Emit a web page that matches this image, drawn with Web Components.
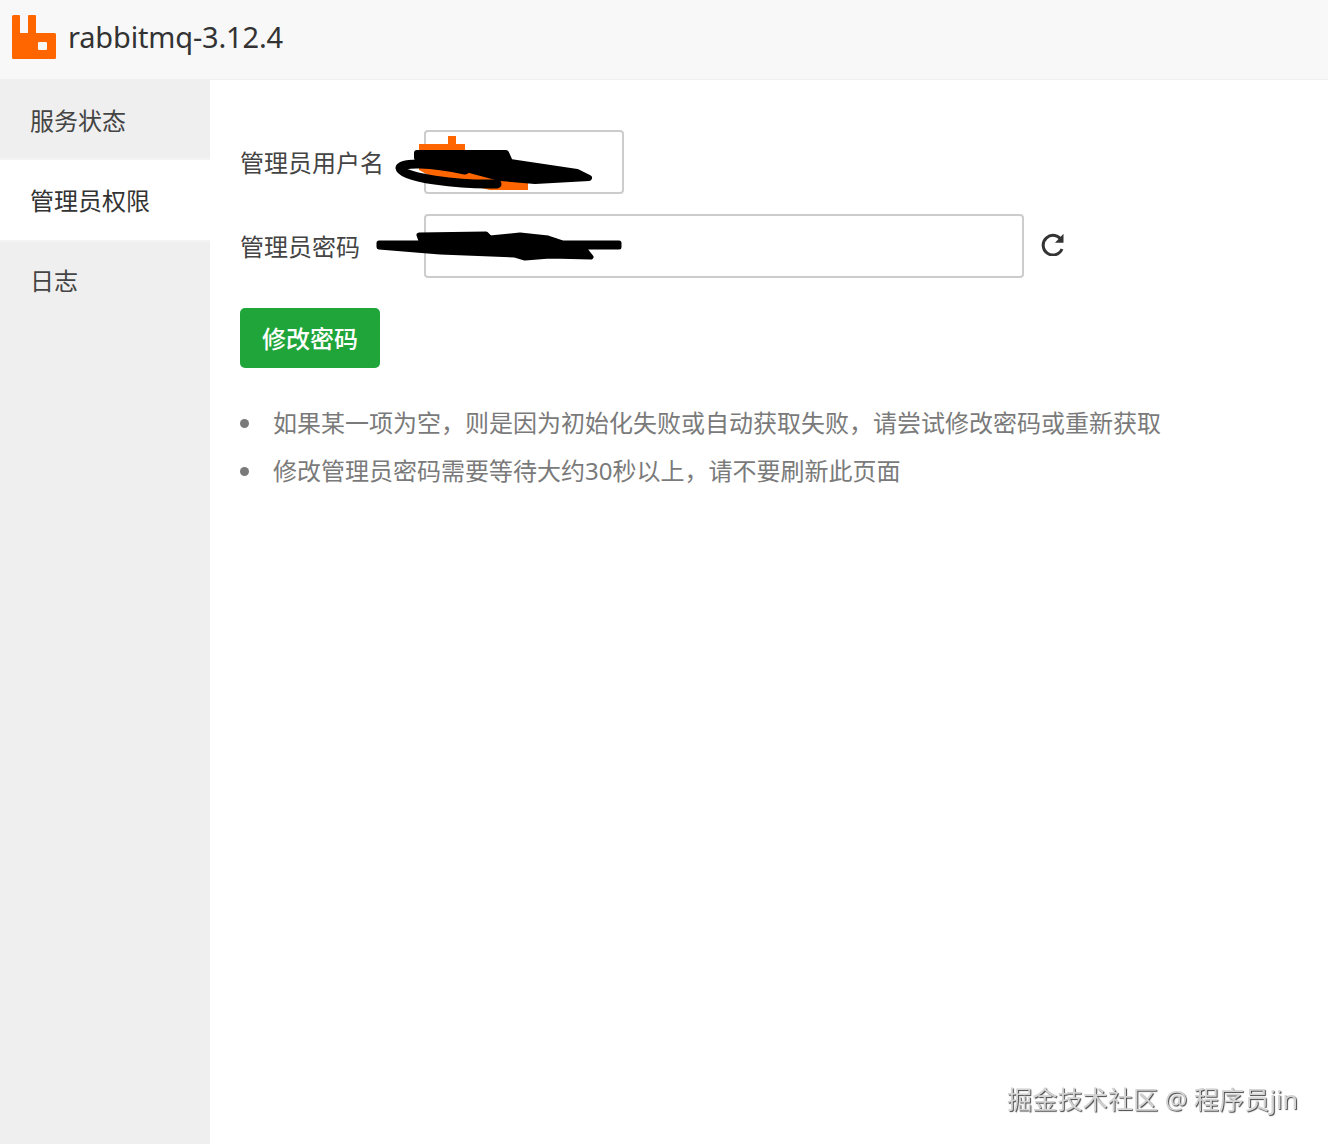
<!DOCTYPE html>
<html lang="zh">
<head>
<meta charset="utf-8">
<title>rabbitmq-3.12.4</title>
<style>
  html, body { margin: 0; height: 100%; background: #fff; }
  body { font-family: "Noto Sans", "Noto Sans CJK SC", sans-serif; color: #333; overflow: hidden; }
</style>
</head>
<body>
<app-shell>
  <app-header slot="header">rabbitmq-3.12.4</app-header>
  <nav-item slot="nav">服务状态</nav-item>
  <nav-item slot="nav" active>管理员权限</nav-item>
  <nav-item slot="nav">日志</nav-item>

  <form-row label="管理员用户名" width="200"></form-row>
  <form-row label="管理员密码" width="600" refresh></form-row>
  <green-button>修改密码</green-button>
  <tip-list>
    <tip-item>如果某一项为空，则是因为初始化失败或自动获取失败，请尝试修改密码或重新获取</tip-item>
    <tip-item>修改管理员密码需要等待大约30秒以上，请不要刷新此页面</tip-item>
  </tip-list>
  <scribble-marks></scribble-marks>
</app-shell>
<water-mark>掘金技术社区 @ 程序员jin</water-mark>

<script>
// components
const shellTpl = document.createElement('template');
shellTpl.innerHTML = `
  <style>
    :host { display: flex; flex-direction: column; height: 1144px; }
    .body { flex: 1; display: flex; min-height: 0; }
    nav { width: 210px; flex: none; background: #efefef; display: flex; flex-direction: column; }
    main { flex: 1; position: relative; padding: 50px 30px 0; display: flex; flex-direction: column; align-items: flex-start; }
  </style>
  <slot name="header"></slot>
  <div class="body">
    <nav><slot name="nav"></slot></nav>
    <main><slot></slot></main>
  </div>
`;
class AppShell extends HTMLElement {
  constructor() {
    super();
    this.attachShadow({ mode: 'open' });
    this.shadowRoot.appendChild(shellTpl.content.cloneNode(true));
  }
}
customElements.define('app-shell', AppShell);

const headerTpl = document.createElement('template');
headerTpl.innerHTML = `
  <style>
    :host { display: flex; align-items: center; gap: 12px; height: 80px; box-sizing: border-box; padding: 0 12px 5px; background: #f8f8f8; border-bottom: 1px solid #f0f0f0; }
    svg { display: block; width: 44px; height: 44px; }
    span { font-size: 29px; letter-spacing: -0.17px; color: #333; line-height: 1; margin-bottom: 2px; }
  </style>
  <svg viewBox="0 0 44 44"><path fill="#ff6600" fill-rule="evenodd" d="M1.500 0H7a1 1 0 0 1 1 1V18H16V1a1 1 0 0 1 1-1H23a1 1 0 0 1 1 1V18H42.500a1.500 1.500 0 0 1 1.500 1.500V42.500a1.500 1.500 0 0 1-1.500 1.500H1.500A1.500 1.500 0 0 1 0 42.500V1.500A1.500 1.500 0 0 1 1.500 0ZM27 27a1 1 0 0 0-1 1V34a1 1 0 0 0 1 1H34a1 1 0 0 0 1-1V28a1 1 0 0 0-1-1Z"/></svg>
  <span><slot></slot></span>
`;
class AppHeader extends HTMLElement {
  constructor() {
    super();
    this.attachShadow({ mode: 'open' });
    this.shadowRoot.appendChild(headerTpl.content.cloneNode(true));
  }
}
customElements.define('app-header', AppHeader);

const navTpl = document.createElement('template');
navTpl.innerHTML = `
  <style>
    :host { display: flex; align-items: center; height: 80px; box-sizing: border-box; padding: 0 0 2px 30px; font-size: 24px; color: #444; }
    :host([active]) { background: #fff; color: #333; box-shadow: 0 0 4px #fff; }
  </style>
  <slot></slot>
`;
class NavItem extends HTMLElement {
  constructor() {
    super();
    this.attachShadow({ mode: 'open' });
    this.shadowRoot.appendChild(navTpl.content.cloneNode(true));
  }
}
customElements.define('nav-item', NavItem);

const rowTpl = document.createElement('template');
rowTpl.innerHTML = `
  <style>
    :host { display: grid; grid-template-columns: 184px auto auto; align-items: center; margin-bottom: 20px; }
    label { font-size: 24px; color: #444; line-height: 1; padding-top: 2px; }
    input { display: block; height: 64px; box-sizing: border-box; border: 2px solid #cccccc; border-radius: 4px; background: #fff; padding: 0 10px; outline: none; }
    svg { display: none; width: 26px; height: 26px; margin: 0 0 6px 16px; }
    :host([refresh]) svg { display: block; }
  </style>
  <label></label>
  <input type="text">
  <svg viewBox="0 0 26 26"><path d="M21.600 10.500A9.800 9.800 0 1 0 22 19" fill="none" stroke="#333" stroke-width="3"/><path d="M23.500 3.700V12.700H15Z" fill="#333"/></svg>
`;
class FormRow extends HTMLElement {
  constructor() {
    super();
    this.attachShadow({ mode: 'open' });
    this.shadowRoot.appendChild(rowTpl.content.cloneNode(true));
  }
  connectedCallback() {
    this.shadowRoot.querySelector('label').textContent = this.getAttribute('label');
    this.shadowRoot.querySelector('input').style.width = this.getAttribute('width') + 'px';
  }
}
customElements.define('form-row', FormRow);

const btnTpl = document.createElement('template');
btnTpl.innerHTML = `
  <style>
    :host { display: block; margin-top: 10px; }
    button { display: block; width: 140px; height: 60px; border: 0; border-radius: 5px; background: #20a53a; color: #fff; font: inherit; font-size: 24px; font-weight: 500; padding: 0 0 2px; }
  </style>
  <button><slot></slot></button>
`;
class GreenButton extends HTMLElement {
  constructor() {
    super();
    this.attachShadow({ mode: 'open' });
    this.shadowRoot.appendChild(btnTpl.content.cloneNode(true));
  }
}
customElements.define('green-button', GreenButton);

const listTpl = document.createElement('template');
listTpl.innerHTML = `
  <style>
    :host { display: block; margin-top: 29px; }
  </style>
  <slot></slot>
`;
class TipList extends HTMLElement {
  constructor() {
    super();
    this.attachShadow({ mode: 'open' });
    this.shadowRoot.appendChild(listTpl.content.cloneNode(true));
  }
}
customElements.define('tip-list', TipList);

const tipTpl = document.createElement('template');
tipTpl.innerHTML = `
  <style>
    :host { display: flex; align-items: center; height: 48px; font-size: 24px; color: #7a7a7a; white-space: nowrap; }
    i { width: 9px; height: 9px; border-radius: 50%; background: #7a7a7a; margin: 5px 24px 0 0; }
  </style>
  <i></i><slot></slot>
`;
class TipItem extends HTMLElement {
  constructor() {
    super();
    this.attachShadow({ mode: 'open' });
    this.shadowRoot.appendChild(tipTpl.content.cloneNode(true));
  }
}
customElements.define('tip-item', TipItem);

// the hand-drawn redaction over the two inputs, coordinates are relative to main
const scribbleTpl = document.createElement('template');
scribbleTpl.innerHTML = `
  <style>
    :host { position: absolute; left: 0; top: 0; width: 500px; height: 220px; pointer-events: none; }
    svg { display: block; width: 100%; height: 100%; overflow: visible; }
  </style>
  <svg viewBox="210 80 500 220">
    <path fill="#ff6600" d="M419 144H448V136H456V144H465V158L500 170L528 175V190H490L430 176L419 170Z"/>
    <path fill="#000" stroke="#000" stroke-width="6" stroke-linejoin="round" d="M417 153H506L510 162L577 172L589 178L535 181L500 178L470 170L440 165L417 158Z"/>
    <path fill="none" stroke="#000" stroke-width="9" stroke-linecap="round" stroke-linejoin="round" d="M497 184C460 185 401 178 400 168C402 162 430 163 465 170"/>
    <path fill="#000" stroke="#000" stroke-width="5" stroke-linejoin="round" d="M379 243L422 243L419 235L486 234L490 238L520 235L548 238L563 243L619 243V247L583 247L591 257L550 256L525 258L515 255L440 252L379 247Z"/>
  </svg>
`;
class ScribbleMarks extends HTMLElement {
  constructor() {
    super();
    this.attachShadow({ mode: 'open' });
    this.shadowRoot.appendChild(scribbleTpl.content.cloneNode(true));
  }
}
customElements.define('scribble-marks', ScribbleMarks);

const markTpl = document.createElement('template');
markTpl.innerHTML = `
  <style>
    :host { position: fixed; right: 30px; bottom: 28px; font-size: 25.2px; line-height: 34px; color: #d4d4d4; text-shadow: 1px 1px 1px #444; white-space: nowrap; }
  </style>
  <slot></slot>
`;
class WaterMark extends HTMLElement {
  constructor() {
    super();
    this.attachShadow({ mode: 'open' });
    this.shadowRoot.appendChild(markTpl.content.cloneNode(true));
  }
}
customElements.define('water-mark', WaterMark);
</script>
</body>
</html>
